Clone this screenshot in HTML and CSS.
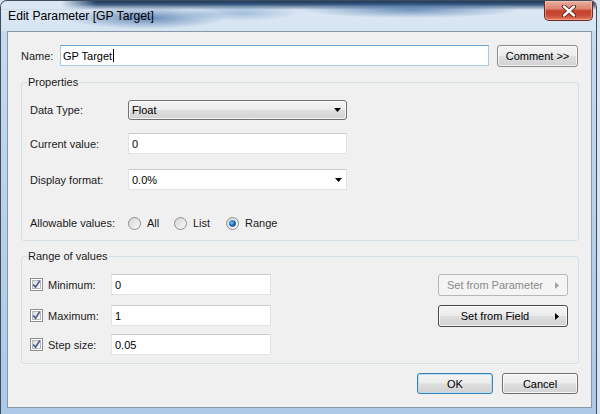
FILE: index.html
```html
<!DOCTYPE html>
<html>
<head>
<meta charset="utf-8">
<link rel="stylesheet" href="styles.css">
</head>
<body>
<div class="screen">
  <div class="window">
    <div class="titlebar">
      <span class="title">Edit Parameter [GP Target]</span>
      <div class="close">
        <svg width="16" height="12" viewBox="0 0 16 12">
          <path d="M3 1.5 L13 10.5 M13 1.5 L3 10.5" stroke="#5a1a12" stroke-width="4.2" stroke-linecap="round"/>
          <path d="M3 1.5 L13 10.5 M13 1.5 L3 10.5" stroke="#ffffff" stroke-width="2.4" stroke-linecap="round"/>
        </svg>
      </div>
    </div>
    <div class="client">
      <div class="name-row">
        <span class="name-label">Name:</span>
        <div class="textbox focused name-input">GP Target<span class="caret"></span></div>
        <div class="btn comment">Comment &gt;&gt;</div>
      </div>

      <fieldset class="group properties">
        <legend>Properties</legend>
        <div class="prow r1">
          <span class="plabel">Data Type:</span>
          <div class="btn combo-btn"><span class="ctext">Float</span><svg class="down" width="7" height="4" viewBox="0 0 7 4"><polygon points="0,0 7,0 3.5,4" fill="#000"/></svg></div>
        </div>
        <div class="prow r2">
          <span class="plabel">Current value:</span>
          <div class="textbox pfield">0</div>
        </div>
        <div class="prow r3">
          <span class="plabel">Display format:</span>
          <div class="textbox pfield combo"><span class="ctext">0.0%</span><svg class="down" width="7" height="4" viewBox="0 0 7 4"><polygon points="0,0 7,0 3.5,4" fill="#000"/></svg></div>
        </div>
        <div class="prow r4">
          <span class="plabel">Allowable values:</span>
          <div class="radios">
            <span class="opt o-all">
              <svg class="radio" width="13" height="13" viewBox="0 0 13 13"><defs><linearGradient id="rg1" x1="0" y1="0" x2="1" y2="1"><stop offset="0" stop-color="#d4d4d4"/><stop offset="1" stop-color="#fbfbfb"/></linearGradient></defs><circle cx="6.5" cy="6.5" r="6" fill="url(#rg1)" stroke="#8e8f8f"/></svg>
              <span>All</span>
            </span>
            <span class="opt o-list">
              <svg class="radio" width="13" height="13" viewBox="0 0 13 13"><circle cx="6.5" cy="6.5" r="6" fill="url(#rg1)" stroke="#8e8f8f"/></svg>
              <span>List</span>
            </span>
            <span class="opt o-range">
              <svg class="radio" width="13" height="13" viewBox="0 0 13 13"><defs><radialGradient id="rdot" cx="0.4" cy="0.4" r="0.6"><stop offset="0" stop-color="#8fd0ff"/><stop offset="0.5" stop-color="#1f7fd4"/><stop offset="1" stop-color="#0b3f7a"/></radialGradient></defs><circle cx="6.5" cy="6.5" r="6" fill="url(#rg1)" stroke="#8e8f8f"/><circle cx="6.5" cy="6.5" r="3.3" fill="url(#rdot)"/></svg>
              <span>Range</span>
            </span>
          </div>
        </div>
      </fieldset>

      <fieldset class="group range">
        <legend>Range of values</legend>
        <div class="range-body">
          <div class="range-left">
            <div class="crow c1">
              <span class="check-label">
                <svg class="check" width="13" height="13" viewBox="0 0 13 13"><defs><linearGradient id="cg" x1="0" y1="0" x2="1" y2="1"><stop offset="0" stop-color="#d8d8d8"/><stop offset="1" stop-color="#fdfdfd"/></linearGradient></defs><rect x="0.5" y="0.5" width="12" height="12" fill="#fff" stroke="#8e8f8f"/><rect x="2.5" y="2.5" width="8" height="8" fill="url(#cg)" stroke="#b4b8bd" stroke-width="1"/><path d="M3.3 6.6 L5.6 9.2 L9.8 2.6" fill="none" stroke="#4a5c8c" stroke-width="1.7"/></svg>
                <span>Minimum:</span>
              </span>
              <div class="textbox rfield">0</div>
            </div>
            <div class="crow c2">
              <span class="check-label">
                <svg class="check" width="13" height="13" viewBox="0 0 13 13"><rect x="0.5" y="0.5" width="12" height="12" fill="#fff" stroke="#8e8f8f"/><rect x="2.5" y="2.5" width="8" height="8" fill="url(#cg)" stroke="#b4b8bd" stroke-width="1"/><path d="M3.3 6.6 L5.6 9.2 L9.8 2.6" fill="none" stroke="#4a5c8c" stroke-width="1.7"/></svg>
                <span>Maximum:</span>
              </span>
              <div class="textbox rfield">1</div>
            </div>
            <div class="crow c3">
              <span class="check-label">
                <svg class="check" width="13" height="13" viewBox="0 0 13 13"><rect x="0.5" y="0.5" width="12" height="12" fill="#fff" stroke="#8e8f8f"/><rect x="2.5" y="2.5" width="8" height="8" fill="url(#cg)" stroke="#b4b8bd" stroke-width="1"/><path d="M3.3 6.6 L5.6 9.2 L9.8 2.6" fill="none" stroke="#4a5c8c" stroke-width="1.7"/></svg>
                <span>Step size:</span>
              </span>
              <div class="textbox rfield">0.05</div>
            </div>
          </div>
          <div class="range-right">
            <div class="btn sbtn disabled"><span class="stext">Set from Parameter</span><svg width="4" height="7" viewBox="0 0 4 7"><polygon points="0,0 4,3.5 0,7" fill="#a3a3a3"/></svg></div>
            <div class="btn sbtn strong"><span class="stext">Set from Field</span><svg width="4" height="7" viewBox="0 0 4 7"><polygon points="0,0 4,3.5 0,7" fill="#000"/></svg></div>
          </div>
        </div>
      </fieldset>

      <div class="actions">
        <div class="btn act default">OK</div>
        <div class="btn act">Cancel</div>
      </div>
    </div>
  </div>
</div>
</body>
</html>
```

FILE: styles.css
```css
html, body {
  margin: 0;
  padding: 0;
}

.screen {
  width: 600px;
  height: 414px;
  overflow: hidden;
  background: #d9e4ef;
}

.window {
  width: 597px;
  height: 414px;
  box-sizing: border-box;
  border: 1px solid #3e4d5d;
  border-bottom: 0;
  border-radius: 7px 7px 0 0;
  background: linear-gradient(180deg, #c9dcef 0%, #b7cfe8 60%, #adc9e8 100%);
  display: flex;
  flex-direction: column;
  overflow: hidden;
}

.titlebar {
  height: 30px;
  flex: none;
  display: flex;
  justify-content: space-between;
  align-items: flex-start;
  background:
    radial-gradient(ellipse 80px 11px at 145px 17px, rgba(52, 100, 158, 0.7), rgba(52, 100, 158, 0)),
    radial-gradient(ellipse 60px 8px at 240px 12px, rgba(90, 140, 190, 0.45), rgba(90, 140, 190, 0)),
    radial-gradient(ellipse 110px 8px at 410px 9px, rgba(45, 95, 155, 0.6), rgba(45, 95, 155, 0)),
    linear-gradient(90deg, #dbe7f3 0, #dbe7f3 60px, rgba(219, 231, 243, 0) 95px) top left / 100% 8px no-repeat,
    linear-gradient(180deg, #223c5c 0, #2f5078 3px, rgba(60, 100, 150, 0) 9px),
    linear-gradient(180deg, #dde8f4 0%, #d6e4f2 100%);
}

.title {
  padding: 8px 0 0 7px;
  font: 12.2px/15px "Liberation Sans", Arial, sans-serif;
  color: #000;
}

.close {
  width: 49px;
  height: 20px;
  box-sizing: border-box;
  margin-right: 3px;
  border: 1px solid #6e2a20;
  border-top: 0;
  border-radius: 0 0 5px 5px;
  background: linear-gradient(180deg, #eab0a2 0%, #dc8571 40%, #c4412d 52%, #c94b35 75%, #e07a5e 100%);
  box-shadow: inset 0 0 0 1px rgba(255, 210, 200, 0.45);
  display: flex;
  align-items: center;
  justify-content: center;
}

.client {
  flex: none;
  height: 377px;
  margin: 0 4px 0 6px;
  box-sizing: border-box;
  border: 1px solid #8798a9;
  background: #f0f0f0;
  padding: 13px 12px 0 13px;
  font: 11px "Liberation Sans", Arial, sans-serif;
  color: #1b1b1b;
}

/* generic controls */
.textbox {
  box-sizing: border-box;
  height: 21px;
  background: #fff;
  border: 1px solid #e0e3e8;
  border-top-color: #c9ccd2;
  padding: 0 3px;
  display: flex;
  align-items: center;
  color: #000;
}

.textbox.focused {
  border-color: #a9cbe9;
  border-top-color: #6fa3d2;
}

.btn {
  box-sizing: border-box;
  height: 22px;
  border: 1px solid #8a8a8a;
  border-radius: 3px;
  background: linear-gradient(180deg, #f4f4f4 0%, #ececec 48%, #dedede 52%, #d2d2d2 100%);
  box-shadow: inset 0 0 0 1px rgba(255, 255, 255, 0.75);
  display: flex;
  align-items: center;
  justify-content: center;
  color: #000;
}

/* name row */
.name-row {
  display: flex;
  align-items: flex-start;
  height: 22px;
}

.name-label {
  width: 39px;
  line-height: 22px;
}

.name-input {
  width: 429px;
  padding-left: 2px;
}

.caret {
  display: inline-block;
  width: 1px;
  height: 13px;
  background: #000;
  margin-left: 1px;
}

.comment {
  width: 81px;
  margin-left: 8px;
}

/* group boxes */
.group {
  margin: 0;
  border: 1px solid #d5dfe6;
  border-radius: 3px;
  min-width: 0;
}

.group legend {
  margin-left: -3px;
  padding: 0 1px;
  font-size: 11px;
  line-height: 13px;
  color: #1b1b1b;
}

.properties {
  margin-top: 9px;
  padding: 11px 8px 7px 8px;
}

.prow {
  display: flex;
  align-items: center;
}

.r1 { height: 20px; }
.r2 { height: 21px; margin-top: 13px; }
.r3 { height: 21px; margin-top: 15px; }
.r4 { height: 20px; margin-top: 23px; }

.plabel {
  width: 98px;
  flex: none;
}

.combo-btn {
  width: 219px;
  height: 20px;
  border-color: #707070;
  justify-content: space-between;
  padding: 0 5px 0 3px;
}

.pfield {
  width: 219px;
}

.combo {
  justify-content: space-between;
  padding-right: 4px;
}

.down {
  display: block;
  flex: none;
}

.radios {
  display: flex;
  align-items: center;
}

.opt {
  display: flex;
  align-items: center;
  gap: 6px;
}

.o-all { width: 46px; }
.o-list { width: 52px; }

.radio, .check {
  display: block;
  flex: none;
}

/* range group */
.range {
  margin-top: 9px;
  padding: 11px 10px 8px 8px;
}

.range-body {
  display: flex;
  justify-content: space-between;
  align-items: flex-start;
}

.crow {
  display: flex;
  align-items: center;
  height: 21px;
}

.c2 { margin-top: 10px; }
.c3 { margin-top: 8px; }

.check-label {
  width: 81px;
  display: flex;
  align-items: center;
  gap: 5px;
}

.rfield {
  width: 160px;
}

.range-right {
  display: flex;
  flex-direction: column;
  gap: 9px;
}

.sbtn {
  width: 130px;
  padding-right: 8px;
}

.stext {
  flex: 1;
  text-align: center;
  padding-right: 4px;
}

.sbtn.disabled {
  border-color: #b4b8bc;
  background: #f4f4f4;
  box-shadow: none;
  color: #8a8a8a;
}

.sbtn.strong {
  border-color: #4a4a4a;
}

/* bottom buttons */
.actions {
  margin-top: 9px;
  display: flex;
  justify-content: flex-end;
  gap: 9px;
  padding-right: 1px;
}

.act {
  width: 76px;
  height: 21px;
  border-color: #707070;
}

.act.default {
  border-color: #3c7fb1;
  box-shadow: inset 0 0 0 1px #b6def5;
}
```
